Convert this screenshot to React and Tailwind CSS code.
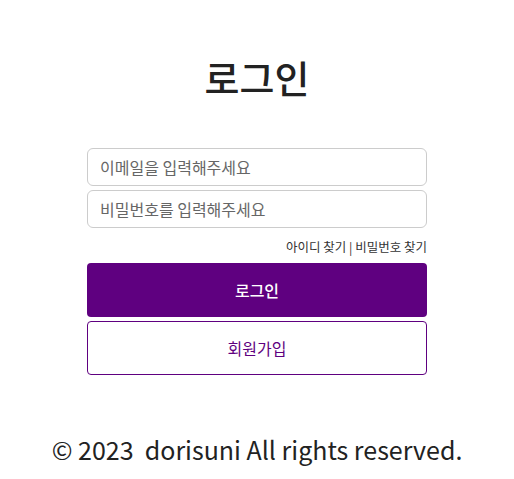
export default function App() {
  return (
    <div
      className="min-h-screen bg-white flex flex-col items-center"
      style={{ fontFamily: '"Noto Sans CJK KR", "Noto Sans", sans-serif' }}
    >
      <h1 className="mt-[49px] text-[38px] leading-[56px] font-medium text-[#222]">로그인</h1>

      <form className="mt-[43px] w-[340px] flex flex-col">
        <input
          type="text"
          placeholder="이메일을 입력해주세요"
          className="h-[38px] px-3 rounded-md border border-[#ccc] text-[16px] placeholder:text-[#666] outline-none"
        />
        <input
          type="password"
          placeholder="비밀번호를 입력해주세요"
          className="mt-1 h-[38px] px-3 rounded-md border border-[#ccc] text-[16px] placeholder:text-[#666] outline-none"
        />
        <div className="mt-[10px] flex justify-end text-[12.5px] leading-[18px] text-[#333] whitespace-pre">
          <a href="#">아이디 찾기</a>
          <span> | </span>
          <a href="#">비밀번호 찾기</a>
        </div>
        <button
          type="button"
          className="mt-[7px] h-[54px] rounded-[4px] bg-[#5f0080] text-white text-[16px] font-medium"
        >
          로그인
        </button>
        <button
          type="button"
          className="mt-1 h-[54px] rounded-[4px] border border-[#5f0080] bg-white text-[#5f0080] text-[16px]"
        >
          회원가입
        </button>
      </form>

      <footer className="mt-[58px] text-[25px] leading-[32px] text-[#222]">
        © 2023&nbsp; dorisuni All rights reserved.
      </footer>
    </div>
  );
}
